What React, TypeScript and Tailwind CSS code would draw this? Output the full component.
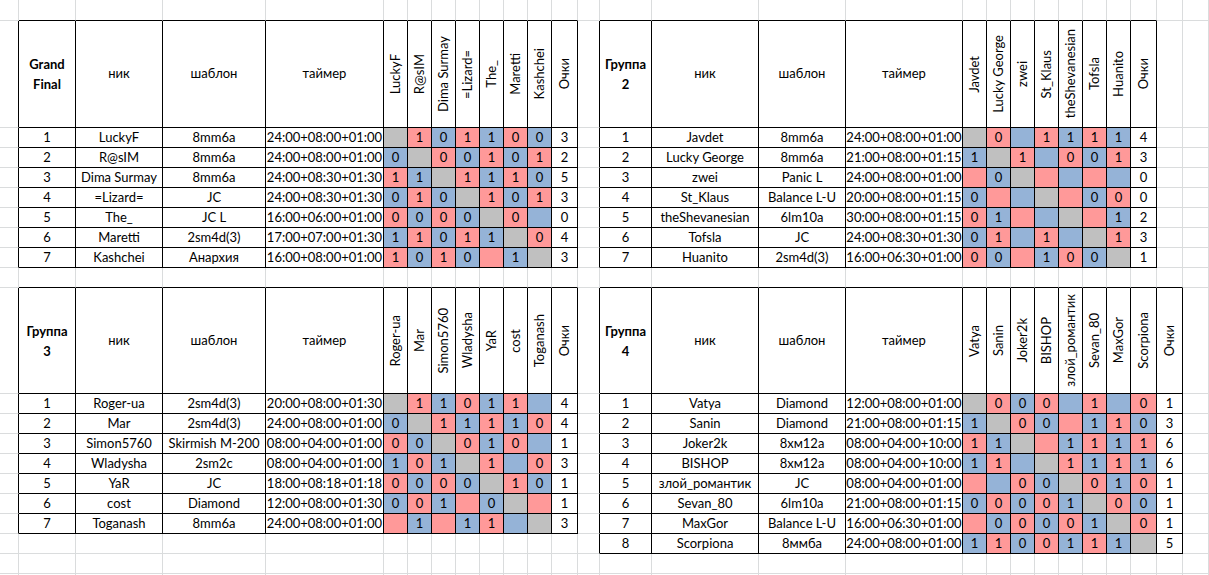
import { Fragment } from 'react';

type Tone = 'g' | 'p' | 'b';

interface Entry {
  nick: string;
  tpl: string;
  timer: string;
  marks: string;
  score: number;
}

interface Group {
  row: number;
  col: number;
  title: [string, string];
  entries: Entry[];
}

type Cell =
  | { kind: 'title'; lines: [string, string] }
  | { kind: 'label'; text: string }
  | { kind: 'vertical'; text: string }
  | { kind: 'text'; text: string }
  | { kind: 'mark'; tone: Tone; text: string };

const groups: Group[] = [
  {
    row: 1,
    col: 1,
    title: ['Grand', 'Final'],
    entries: [
      { nick: 'LuckyF', tpl: '8mm6a', timer: '24:00+08:00+01:00', marks: 'g p1 b0 p1 b1 p0 b0', score: 3 },
      { nick: 'R@sIM', tpl: '8mm6a', timer: '24:00+08:00+01:00', marks: 'b0 g p0 b0 p1 b0 p1', score: 2 },
      { nick: 'Dima Surmay', tpl: '8mm6a', timer: '24:00+08:30+01:30', marks: 'p1 b1 g p1 b1 p1 b0', score: 5 },
      { nick: '=Lizard=', tpl: 'JC', timer: '24:00+08:30+01:30', marks: 'b0 p1 b0 g p1 b0 p1', score: 3 },
      { nick: 'The_', tpl: 'JC L', timer: '16:00+06:00+01:00', marks: 'p0 b0 p0 b0 g p0 b', score: 0 },
      { nick: 'Maretti', tpl: '2sm4d(3)', timer: '17:00+07:00+01:30', marks: 'b1 p1 b0 p1 b1 g p0', score: 4 },
      { nick: 'Kashchei', tpl: 'Анархия', timer: '16:00+08:00+01:00', marks: 'p1 b0 p1 b0 p b1 g', score: 3 },
    ],
  },
  {
    row: 1,
    col: 14,
    title: ['Группа', '2'],
    entries: [
      { nick: 'Javdet', tpl: '8mm6a', timer: '24:00+08:00+01:00', marks: 'g p0 b p1 b1 p1 b1', score: 4 },
      { nick: 'Lucky George', tpl: '8mm6a', timer: '21:00+08:00+01:15', marks: 'b1 g p1 b p0 b0 p1', score: 3 },
      { nick: 'zwei', tpl: 'Panic L', timer: '24:00+08:00+01:00', marks: 'p b0 g p b p b', score: 0 },
      { nick: 'St_Klaus', tpl: 'Balance L-U', timer: '20:00+08:00+01:15', marks: 'b0 p b g p b0 p0', score: 0 },
      { nick: 'theShevanesian', tpl: '6lm10a', timer: '30:00+08:00+01:15', marks: 'p0 b1 p b g p b1', score: 2 },
      { nick: 'Tofsla', tpl: 'JC', timer: '24:00+08:30+01:30', marks: 'b0 p1 b p1 b g p1', score: 3 },
      { nick: 'Huanito', tpl: '2sm4d(3)', timer: '16:00+06:30+01:00', marks: 'p0 b0 p b1 p0 b0 g', score: 1 },
    ],
  },
  {
    row: 10,
    col: 1,
    title: ['Группа', '3'],
    entries: [
      { nick: 'Roger-ua', tpl: '2sm4d(3)', timer: '20:00+08:00+01:30', marks: 'g p1 b1 p0 b1 p1 b', score: 4 },
      { nick: 'Mar', tpl: '2sm4d(3)', timer: '24:00+08:00+01:00', marks: 'b0 g p1 b1 p1 b1 p0', score: 4 },
      { nick: 'Simon5760', tpl: 'Skirmish M-200', timer: '08:00+04:00+01:00', marks: 'p0 b0 g p0 b1 p0 b', score: 1 },
      { nick: 'Wladysha', tpl: '2sm2c', timer: '08:00+04:00+01:00', marks: 'b1 p0 b1 g p1 b p0', score: 3 },
      { nick: 'YaR', tpl: 'JC', timer: '18:00+08:18+01:18', marks: 'p0 b0 p0 b0 g p1 b0', score: 1 },
      { nick: 'cost', tpl: 'Diamond', timer: '12:00+08:00+01:30', marks: 'b0 p0 b1 p b0 g p', score: 1 },
      { nick: 'Toganash', tpl: '8mm6a', timer: '24:00+08:00+01:00', marks: 'p b1 p b1 p1 b g', score: 3 },
    ],
  },
  {
    row: 10,
    col: 14,
    title: ['Группа', '4'],
    entries: [
      { nick: 'Vatya', tpl: 'Diamond', timer: '12:00+08:00+01:00', marks: 'g p0 b0 p0 b p1 b p0', score: 1 },
      { nick: 'Sanin', tpl: 'Diamond', timer: '21:00+08:00+01:15', marks: 'b1 g p0 b0 p b1 p1 b0', score: 3 },
      { nick: 'Joker2k', tpl: '8хм12а', timer: '08:00+04:00+10:00', marks: 'p1 b1 g p b1 p1 b1 p1', score: 6 },
      { nick: 'BISHOP', tpl: '8хм12а', timer: '08:00+04:00+10:00', marks: 'b1 p1 b g p1 b1 p1 b1', score: 6 },
      { nick: 'злой_романтик', tpl: 'JC', timer: '08:00+04:00+01:00', marks: 'p b p0 b0 g p0 b1 p0', score: 1 },
      { nick: 'Sevan_80', tpl: '6lm10a', timer: '21:00+08:00+01:15', marks: 'b0 p0 b0 p0 b1 g p0 b0', score: 1 },
      { nick: 'MaxGor', tpl: 'Balance L-U', timer: '16:00+06:30+01:00', marks: 'p b0 p0 b0 p0 b1 g p0', score: 1 },
      { nick: 'Scorpiona', tpl: '8ммба', timer: '24:00+08:00+01:00', marks: 'b1 p1 b0 p0 b1 p1 b1 g', score: 5 },
    ],
  },
];

const COL_COUNT = 28;
const ROW_COUNT = 21;
const key = (r: number, c: number) => `${r}-${c}`;

// fill the sheet: every table cell keyed by row/column
const cells = new Map<string, Cell>();
for (const g of groups) {
  const n = g.entries.length;
  cells.set(key(g.row, g.col), { kind: 'title', lines: g.title });
  ['ник', 'шаблон', 'таймер'].forEach((t, i) => cells.set(key(g.row, g.col + 1 + i), { kind: 'label', text: t }));
  g.entries.forEach((e, i) => cells.set(key(g.row, g.col + 4 + i), { kind: 'vertical', text: e.nick }));
  cells.set(key(g.row, g.col + 4 + n), { kind: 'vertical', text: 'Очки' });
  g.entries.forEach((e, i) => {
    const r = g.row + 1 + i;
    [String(i + 1), e.nick, e.tpl, e.timer].forEach((t, j) => cells.set(key(r, g.col + j), { kind: 'text', text: t }));
    e.marks.split(' ').forEach((m, j) =>
      cells.set(key(r, g.col + 4 + j), { kind: 'mark', tone: m[0] as Tone, text: m.slice(1) })
    );
    cells.set(key(r, g.col + 4 + n), { kind: 'text', text: String(e.score) });
  });
}

const toneBg: Record<Tone, string> = {
  g: 'bg-[#c0c0c0]',
  p: 'bg-[#ff9999]',
  b: 'bg-[#95b3d7]',
};

function CellBody({ cell }: { cell?: Cell }) {
  if (!cell) return null;
  switch (cell.kind) {
    case 'title':
      return (
        <div className="flex h-full flex-col items-center justify-center font-bold leading-[20px]">
          <span>{cell.lines[0]}</span>
          <span>{cell.lines[1]}</span>
        </div>
      );
    case 'label':
      return <div className="flex h-full items-center justify-center">{cell.text}</div>;
    case 'vertical':
      return (
        <div className="flex h-full items-center justify-center">
          <span className="rotate-180 whitespace-nowrap [writing-mode:vertical-rl]">{cell.text}</span>
        </div>
      );
    case 'mark':
      return (
        <div className={`flex h-full items-center justify-center pt-px ${toneBg[cell.tone]}`}>{cell.text}</div>
      );
    default:
      return <div className="flex h-full items-center justify-center whitespace-nowrap pt-px">{cell.text}</div>;
  }
}

export default function App() {
  return (
    <div className="h-[575px] w-[1209px] overflow-hidden bg-white font-['Lato',sans-serif] text-[13px] text-black">
      <div className="grid grid-cols-[19px_57px_87px_103px_118px_repeat(7,24px)_26px_22px_52px_107px_87px_117px_repeat(7,24px)_26px_26px_26px] grid-rows-[21px_107px_repeat(7,20px)_20px_106px_repeat(8,20px)_20px_20px]">
        {Array.from({ length: ROW_COUNT }, (_, r) => (
          <Fragment key={r}>
            {Array.from({ length: COL_COUNT }, (_, c) => {
              const cell = cells.get(key(r, c));
              const rightDark = !!cell || cells.has(key(r, c + 1));
              const bottomDark = !!cell || cells.has(key(r + 1, c));
              return (
                <div
                  key={c}
                  className={`overflow-visible border-r border-b ${rightDark ? 'border-r-black' : 'border-r-[#dadcdd]'} ${
                    bottomDark ? 'border-b-black' : 'border-b-[#dadcdd]'
                  }`}
                >
                  <CellBody cell={cell} />
                </div>
              );
            })}
          </Fragment>
        ))}
      </div>
    </div>
  );
}
